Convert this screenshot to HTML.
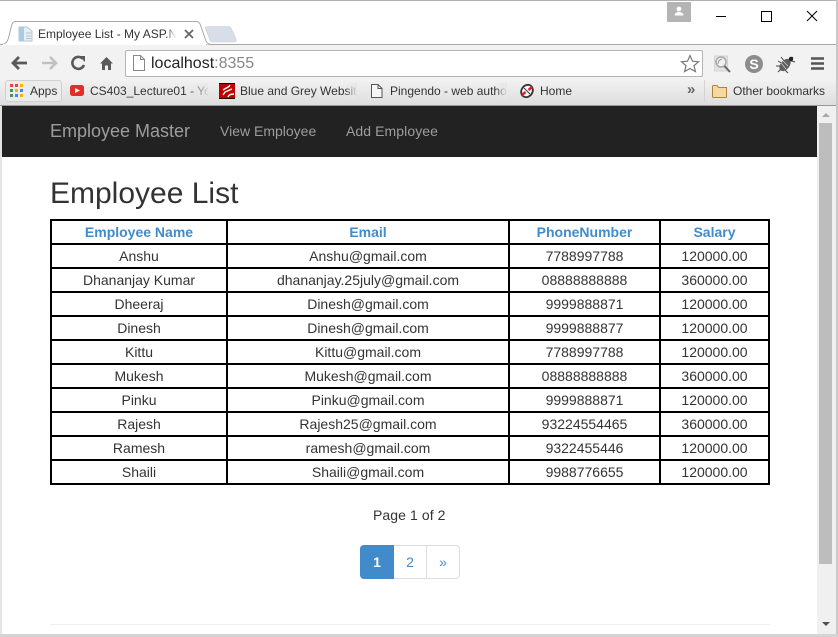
<!DOCTYPE html>
<html><head><meta charset="utf-8">
<style>
html,body{margin:0;padding:0;width:838px;height:637px;overflow:hidden;background:#fff;font-family:"Liberation Sans",sans-serif;color:#333}
.a{position:absolute}
.t{position:absolute;white-space:nowrap}
table{position:absolute;left:50px;top:219px;width:720px;height:266px;border-collapse:separate;border-spacing:0;table-layout:fixed;font-size:14px;text-align:center;color:#333;border-top:2px solid #000;border-left:2px solid #000;box-sizing:border-box}
td,th{border-right:2px solid #000;border-bottom:2px solid #000;padding:0;height:22px;line-height:22px;box-sizing:content-box}
th{color:#428bca;font-weight:bold}
</style></head>
<body>
<!-- window frame -->
<div class="a" style="left:0;top:0;width:838px;height:1px;background:#b0b0b0"></div>
<div class="a" style="left:836px;top:0;width:2px;height:637px;background:#c8c8c8"></div>
<!-- tab strip -->
<div class="a" style="left:0;top:44px;width:836px;height:1px;background:#a8a8a8"></div>
<svg class="a" style="left:0;top:18px" width="245" height="28">
<path d="M2 26.500Q7 26 8.500 20L12 6Q13 3.500 16 3.500L196 3.500Q199 3.500 200 6L206 23Q207 26 211 26.500" fill="#fff" stroke="#a8a8a8"/>
<path d="M205 9.500Q205.500 8.500 208 8.500L228 8.500Q230 8.500 231 10L236 21Q237 24 234 24L213 24Q211 24 210 22Z" fill="#d8dee8" stroke="#c8ced8" stroke-width=".6"/>
<rect x="3" y="26" width="203" height="3" fill="#fff"/>
</svg>
<svg class="a" style="left:18px;top:26px" width="17" height="16">
<path d="M1 1H9L14 5V15H1Z" fill="#e6eef6" stroke="#b8c4d0"/><rect x="1" y="1" width="5" height="14" fill="#a9cbe8"/><path d="M8 7H13M8 10H13M8 12.500H13" stroke="#b8c0ca"/>
</svg>
<div class="t" style="left:38px;top:26px;font-size:12px;line-height:16px;color:#333;width:138px;overflow:hidden">Employee List - My ASP.N</div>
<div class="a" style="left:166px;top:26px;width:10px;height:16px;background:linear-gradient(90deg,rgba(255,255,255,0),#fff)"></div>
<svg class="a" style="left:184px;top:29px" width="10" height="10"><path d="M1 1L9 9M9 1L1 9" stroke="#666" stroke-width="1.800"/></svg>
<!-- window controls -->
<div class="a" style="left:667px;top:2px;width:24px;height:20px;background:#b4b4b4"></div>
<svg class="a" style="left:673px;top:6px" width="12" height="10"><circle cx="6" cy="3" r="2.400" fill="#fff"/><path d="M1.500 9.500Q2 6 6 6Q10 6 10.500 9.500Z" fill="#fff"/></svg>
<div class="a" style="left:716px;top:16px;width:10px;height:1px;background:#000"></div>
<div class="a" style="left:761px;top:11px;width:9px;height:9px;border:1px solid #000"></div>
<svg class="a" style="left:806px;top:10px" width="12" height="12"><path d="M1 1L11 11M11 1L1 11" stroke="#000" stroke-width="1"/></svg>
<!-- toolbar -->
<div class="a" style="left:0;top:45px;width:836px;height:34px;background:#f2f2f2"></div>
<svg class="a" style="left:10px;top:54px" width="110" height="18">
<path d="M3 9H17M9 3L3 9L9 15" fill="none" stroke="#5a5a5a" stroke-width="2.800"/>
<path d="M32 9H46M40 3L46 9L40 15" fill="none" stroke="#c0c0c0" stroke-width="2.600"/>
<path d="M72.500 4.500A6 6 0 1 0 74 11" fill="none" stroke="#5a5a5a" stroke-width="2.600"/><path d="M69 2H75V8Z" fill="#5a5a5a"/>
<path d="M90 9.500L96.500 3L103 9.500H101V16H98V11.500H95V16H92V9.500Z" fill="#5a5a5a"/>
</svg>
<div class="a" style="left:125px;top:50px;width:576px;height:25px;background:#fff;border:1px solid #b4b4b4;border-radius:2px"></div>
<svg class="a" style="left:132px;top:55px" width="14" height="16"><path d="M1.500 .5H8.500L12.500 4.500V15.500H1.500Z" fill="#fff" stroke="#888"/><path d="M8.500 .5V4.500H12.500" fill="none" stroke="#888"/></svg>
<div class="t" style="left:151px;top:54px;font-size:16px;line-height:19px;color:#222">localhost<span style="color:#888">:8355</span></div>
<svg class="a" style="left:680px;top:54px" width="20" height="19"><path d="M10 1.500L12.500 7.200L18.500 7.700L14 11.700L15.400 17.500L10 14.500L4.600 17.500L6 11.700L1.500 7.700L7.500 7.200Z" fill="#fff" stroke="#777" stroke-width="1.200"/></svg>
<svg class="a" style="left:713px;top:54px" width="20" height="20"><rect x="1.500" y="2" width="13" height="15" fill="#e2e2e2" stroke="#d4d4d4"/><circle cx="8" cy="8" r="5" fill="#f0f0f0" stroke="#aaa" stroke-width="1.500"/><path d="M5 10Q5 6 9 5" fill="none" stroke="#999"/><path d="M11.500 12L17 18" stroke="#666" stroke-width="2"/></svg>
<svg class="a" style="left:744px;top:54px" width="20" height="20"><circle cx="10" cy="10" r="9" fill="#8d8d8d"/><text x="10" y="15" text-anchor="middle" font-family="Liberation Sans" font-weight="bold" font-size="14" fill="#fff">S</text></svg>
<svg class="a" style="left:776px;top:54px" width="20" height="20"><path d="M2 7L7 10M5 3L9 8M0 12L5 12M2 18L5 15M9 16L12 19M13 9L17 3M12 6L19 8" stroke="#444"/><ellipse cx="9" cy="11" rx="4.500" ry="7" transform="rotate(40 9 11)" fill="#5e5e5e"/><path d="M5 9L10 15M7 7L12 12" stroke="#ccc" stroke-width=".8"/><circle cx="15" cy="5" r="2.200" fill="#222"/></svg>
<svg class="a" style="left:811px;top:57px" width="13" height="13"><path d="M0 1.500H13M0 6.500H13M0 11.500H13" stroke="#555" stroke-width="2.500"/></svg>
<!-- bookmarks -->
<div class="a" style="left:0;top:79px;width:836px;height:26px;background:linear-gradient(#f2f2f2,#dedede)"></div>
<div class="a" style="left:0;top:105px;width:836px;height:1px;background:#999"></div>
<div class="a" style="left:5px;top:80px;width:55px;height:20px;background:#ececec;border:1px solid #d0d0d0;border-radius:3px"></div>
<svg class="a" style="left:10px;top:84px" width="14" height="14">
<g><rect x="0" y="0" width="3" height="3" fill="#e8453c"/><rect x="5" y="0" width="3" height="3" fill="#e8453c"/><rect x="10" y="0" width="3" height="3" fill="#f4b400"/><rect x="0" y="5" width="3" height="3" fill="#3d9a50"/><rect x="5" y="5" width="3" height="3" fill="#f4b400"/><rect x="10" y="5" width="3" height="3" fill="#4285f4"/><rect x="0" y="10" width="3" height="3" fill="#3d9a50"/><rect x="5" y="10" width="3" height="3" fill="#4285f4"/><rect x="10" y="10" width="3" height="3" fill="#f4b400"/></g></svg>
<div class="t" style="left:30px;top:83px;font-size:12px;line-height:16px">Apps</div>
<svg class="a" style="left:70px;top:85px" width="14" height="11"><rect width="14" height="11" rx="2.500" fill="#e52d27"/><path d="M5 3L10 5.500L5 8Z" fill="#fff"/></svg>
<div class="t" style="left:90px;top:83px;font-size:12px;line-height:16px;width:118px;overflow:hidden">CS403_Lecture01 - You</div>
<div class="a" style="left:188px;top:83px;width:20px;height:16px;background:linear-gradient(90deg,rgba(230,230,230,0),rgba(230,230,230,.9))"></div>
<svg class="a" style="left:219px;top:83px" width="16" height="16"><rect width="16" height="16" fill="#c00000"/><path d="M0 .5H16M0 15.500H16" stroke="#200"/><path d="M4 7L10 3.500L11 2M13 6L6 9L4 12M9 14Q10 11 15 11" fill="none" stroke="#fff" stroke-width="1.400"/></svg>
<div class="t" style="left:240px;top:83px;font-size:12px;line-height:16px;width:117px;overflow:hidden">Blue and Grey Website</div>
<div class="a" style="left:345px;top:83px;width:12px;height:16px;background:linear-gradient(90deg,rgba(230,230,230,0),#e6e6e6)"></div>
<svg class="a" style="left:371px;top:84px" width="12" height="14"><path d="M.5 .5H7L11 4.500V13.500H.5Z" fill="#f6f6f6" stroke="#555"/><path d="M7 .5V4.500H11" fill="none" stroke="#555"/></svg>
<div class="t" style="left:390px;top:83px;font-size:12px;line-height:16px;width:117px;overflow:hidden">Pingendo - web authoring</div>
<div class="a" style="left:495px;top:83px;width:12px;height:16px;background:linear-gradient(90deg,rgba(230,230,230,0),#e6e6e6)"></div>
<svg class="a" style="left:519px;top:83px" width="16" height="16"><ellipse cx="8" cy="8" rx="5.500" ry="6.500" transform="rotate(35 8 8)" fill="#fff" stroke="#333" stroke-width="1.800"/><path d="M3 12L6.500 9M9.500 7L13 4" stroke="#e02020" stroke-width="2.500"/><path d="M5 5L11 11" stroke="#333"/></svg>
<div class="t" style="left:540px;top:83px;font-size:12px;line-height:16px">Home</div>
<div class="t" style="left:687px;top:82px;font-size:15px;line-height:16px;font-weight:bold;color:#666">»</div>
<div class="a" style="left:704px;top:80px;width:1px;height:22px;background:#d4d4d4"></div>
<svg class="a" style="left:711px;top:84px" width="17" height="14"><path d="M1.500 3V12.500Q1.500 13.500 2.500 13.500H14.500Q15.500 13.500 15.500 12.500V3.500H7.500L6 1.500H2.500Q1.500 1.500 1.500 3Z" fill="#f5d9a0" stroke="#a8843c"/></svg>
<div class="t" style="left:733px;top:83px;font-size:12px;line-height:16px">Other bookmarks</div>
<!-- navbar -->
<div class="a" style="left:2px;top:106px;width:815px;height:51px;background:#222"></div>
<div class="t" style="left:50px;top:120px;font-size:18px;line-height:22px;color:#9d9d9d">Employee Master</div>
<div class="t" style="left:220px;top:122px;font-size:14px;line-height:18px;color:#9d9d9d">View Employee</div>
<div class="t" style="left:346px;top:122px;font-size:14px;line-height:18px;color:#9d9d9d;letter-spacing:.08px">Add Employee</div>
<!-- left edge -->
<div class="a" style="left:0;top:106px;width:2px;height:531px;background:#e4e4e4"></div>
<!-- content -->
<div class="t" style="left:50px;top:176px;font-size:30px;line-height:36px;color:#333">Employee List</div>
<table>
<colgroup><col style="width:176px"><col style="width:282px"><col style="width:151px"><col style="width:109px"></colgroup>
<tr><th>Employee Name</th><th>Email</th><th>PhoneNumber</th><th>Salary</th></tr>
<tr><td>Anshu</td><td>Anshu@gmail.com</td><td>7788997788</td><td>120000.00</td></tr>
<tr><td>Dhananjay Kumar</td><td>dhananjay.25july@gmail.com</td><td>08888888888</td><td>360000.00</td></tr>
<tr><td>Dheeraj</td><td>Dinesh@gmail.com</td><td>9999888871</td><td>120000.00</td></tr>
<tr><td>Dinesh</td><td>Dinesh@gmail.com</td><td>9999888877</td><td>120000.00</td></tr>
<tr><td>Kittu</td><td>Kittu@gmail.com</td><td>7788997788</td><td>120000.00</td></tr>
<tr><td>Mukesh</td><td>Mukesh@gmail.com</td><td>08888888888</td><td>360000.00</td></tr>
<tr><td>Pinku</td><td>Pinku@gmail.com</td><td>9999888871</td><td>120000.00</td></tr>
<tr><td>Rajesh</td><td>Rajesh25@gmail.com</td><td>93224554465</td><td>360000.00</td></tr>
<tr><td>Ramesh</td><td>ramesh@gmail.com</td><td>9322455446</td><td>120000.00</td></tr>
<tr><td>Shaili</td><td>Shaili@gmail.com</td><td>9988776655</td><td>120000.00</td></tr>
</table>
<div class="t" style="left:373px;top:506px;font-size:14px;line-height:18px;letter-spacing:.08px">Page 1 of 2</div>
<!-- pagination -->
<div class="a" style="left:360px;top:545px;width:100px;height:34px;box-sizing:border-box;border:1px solid #ddd;border-radius:4px"></div>
<div class="a" style="left:360px;top:545px;width:34px;height:34px;background:#428bca;border-radius:4px 0 0 4px;color:#fff;font-size:14px;font-weight:bold;text-align:center;line-height:34px">1</div>
<div class="a" style="left:394px;top:545px;width:33px;height:34px;box-sizing:border-box;border-right:1px solid #ddd;color:#428bca;font-size:14px;text-align:center;line-height:34px">2</div>
<div class="a" style="left:427px;top:545px;width:32px;height:34px;color:#428bca;font-size:14px;text-align:center;line-height:34px">»</div>
<div class="a" style="left:50px;top:624px;width:720px;height:1px;background:#eee"></div>
<!-- scrollbar -->
<div class="a" style="left:817px;top:106px;width:19px;height:528px;background:#f0f0f0"></div>
<svg class="a" style="left:821px;top:112px" width="10" height="6"><path d="M1 5L5 1L9 5Z" fill="#a8a8a8"/></svg>
<div class="a" style="left:819px;top:123px;width:13px;height:441px;background:#bdbdbd"></div>
<svg class="a" style="left:821px;top:621px" width="10" height="6"><path d="M1 1L5 5L9 1Z" fill="#505050"/></svg>
<!-- bottom edge -->
<div class="a" style="left:0;top:634px;width:838px;height:3px;background:#d4d4d4"></div>
</body></html>
